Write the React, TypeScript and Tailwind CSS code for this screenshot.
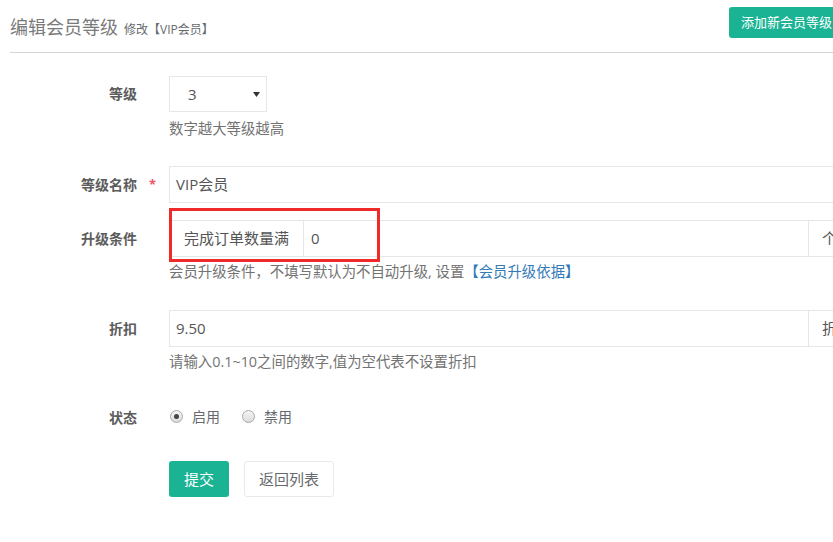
import React from "react";

const font = { fontFamily: '"Open Sans", "Noto Sans CJK SC", sans-serif' };

function Label({ children, required }: { children: React.ReactNode; required?: boolean }) {
  return (
    <div className="relative w-[127px] shrink-0 text-right text-[14px] font-bold text-[#5c5c5c] leading-[37px]">
      {children}
      {required && (
        <span className="absolute left-[139px] top-0 text-[13px] font-bold text-[#ed5565]">*</span>
      )}
    </div>
  );
}

function Radio({ checked, label }: { checked?: boolean; label: string }) {
  return (
    <div className="flex items-center">
      <span className="flex h-[13px] w-[13px] items-center justify-center rounded-full border border-[#a9a9a9] bg-gradient-to-b from-[#f4f4f4] to-[#dcdcdc]">
        {checked && <span className="h-[5px] w-[5px] rounded-full bg-[#444]" />}
      </span>
      <span className="ml-[9px] text-[14px] text-[#676a6c]">{label}</span>
    </div>
  );
}

export default function App() {
  return (
    <div className="w-[833px] h-[542px] overflow-hidden bg-white" style={font}>
      <div className="w-[847px] pl-[10px]">
        {/* Header */}
        <div className="flex h-[53px] border-b border-[#d4d4d4]">
          <div className="flex items-baseline pt-[14px]">
            <span className="text-[18px] text-[#7a7a7a] leading-[26px]">编辑会员等级</span>
            <span className="ml-[6px] text-[12px] text-[#676a6c]">修改【VIP会员】</span>
          </div>
          <button className="ml-auto mr-[3px] mt-[7px] h-[31px] whitespace-nowrap rounded-[3px] bg-[#1ab394] px-[12px] text-[13px] text-white">
            添加新会员等级
          </button>
        </div>

        {/* 等级 */}
        <div className="mt-[23px] flex">
          <div className="relative w-[127px] shrink-0 text-right text-[14px] font-bold text-[#5c5c5c] leading-[36px]">等级</div>
          <div className="ml-[32px]">
            <div className="relative flex h-[36px] w-[98px] items-center border border-[#e5e6e7] pl-[18px] text-[15px] text-[#555]">
              3
              <svg className="absolute right-[6px] top-[15px]" width="7" height="5" viewBox="0 0 7 5">
                <path d="M0 0 L7 0 L3.5 5 Z" fill="#333" />
              </svg>
            </div>
            <div className="mt-[8px] text-[14.4px] leading-[18px] text-[#737373]">数字越大等级越高</div>
          </div>
        </div>

        {/* 等级名称 */}
        <div className="mt-[28px] flex">
          <Label required>等级名称</Label>
          <div className="ml-[32px] flex-1">
            <div className="flex h-[37px] items-center border border-[#e5e6e7] pl-[6px] text-[15px] text-[#555]">VIP会员</div>
          </div>
        </div>

        {/* 升级条件 */}
        <div className="mt-[17px] flex">
          <Label>升级条件</Label>
          <div className="relative ml-[32px] flex-1">
            <div className="flex h-[37px] border border-[#e5e6e7] text-[15px] text-[#555]">
              <div className="flex w-[134px] shrink-0 items-center justify-center border-r border-[#e5e6e7]">完成订单数量满</div>
              <div className="flex flex-1 items-center pl-[7px]">0</div>
              <div className="flex w-[38px] shrink-0 items-center border-l border-[#e5e6e7] pl-[13px]">个</div>
            </div>
            <div className="pointer-events-none absolute left-0 top-[-12px] h-[54px] w-[211px] border-[3px] border-[#f02a2a]" />
            <div className="mt-[6px] text-[14.4px] leading-[18px] text-[#737373]">
              会员升级条件，不填写默认为不自动升级, 设置<span className="text-[#337ab7]">【会员升级依据】</span>
            </div>
          </div>
        </div>

        {/* 折扣 */}
        <div className="mt-[29px] flex">
          <Label>折扣</Label>
          <div className="ml-[32px] flex-1">
            <div className="flex h-[37px] border border-[#e5e6e7] text-[15px] text-[#555]">
              <div className="flex flex-1 items-center pl-[6px]">9.50</div>
              <div className="flex w-[38px] shrink-0 items-center border-l border-[#e5e6e7] pl-[13px]">折</div>
            </div>
            <div className="mt-[6px] text-[14.4px] leading-[18px] text-[#737373]">请输入0.1~10之间的数字,值为空代表不设置折扣</div>
          </div>
        </div>

        {/* 状态 */}
        <div className="mt-[36px] flex items-center">
          <div className="w-[127px] shrink-0 text-right text-[14px] font-bold text-[#5c5c5c] leading-[20px]">状态</div>
          <div className="ml-[33px] flex items-center gap-[22px] -translate-y-[1px]">
            <Radio checked label="启用" />
            <Radio label="禁用" />
          </div>
        </div>

        {/* Buttons */}
        <div className="mt-[33px] flex">
          <div className="w-[127px] shrink-0" />
          <div className="ml-[32px] flex gap-[15px]">
            <button className="h-[36px] w-[60px] rounded-[3px] bg-[#1ab394] text-[15px] text-white">提交</button>
            <button className="h-[36px] w-[90px] rounded-[3px] border border-[#e7eaec] bg-white text-[15px] text-[#676a6c]">返回列表</button>
          </div>
        </div>
      </div>
    </div>
  );
}
